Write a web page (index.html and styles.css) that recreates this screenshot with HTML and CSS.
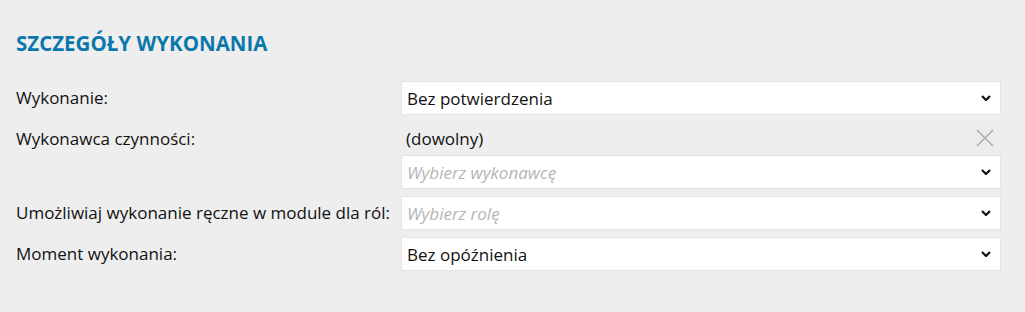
FILE: index.html
```html
<!DOCTYPE html>
<html lang="pl">
<head>
<meta charset="utf-8">
<link rel="stylesheet" href="styles.css">
</head>
<body>
<section class="panel">
  <h2 class="title">SZCZEGÓŁY WYKONANIA</h2>
  <div class="form">
    <div class="label">Wykonanie:</div>
    <div class="field">
      <div class="select"><span class="value">Bez potwierdzenia</span><svg class="chev" viewBox="0 0 10 6" width="10" height="6"><path d="M1 1 L5 5 L9 1" fill="none" stroke="#111" stroke-width="2.2"/></svg></div>
    </div>

    <div class="label">Wykonawca czynności:</div>
    <div class="field stack">
      <div class="chosen"><span class="value">(dowolny)</span><span class="clear"><svg viewBox="0 0 18 18" width="18" height="18"><path d="M1 1 L17 17 M17 1 L1 17" stroke="#a8a8a8" stroke-width="1.3" fill="none"/></svg></span></div>
      <div class="select"><span class="placeholder">Wybierz wykonawcę</span><svg class="chev" viewBox="0 0 10 6" width="10" height="6"><path d="M1 1 L5 5 L9 1" fill="none" stroke="#111" stroke-width="2.2"/></svg></div>
    </div>

    <div class="label">Umożliwiaj wykonanie ręczne w module dla ról:</div>
    <div class="field">
      <div class="select"><span class="placeholder">Wybierz rolę</span><svg class="chev" viewBox="0 0 10 6" width="10" height="6"><path d="M1 1 L5 5 L9 1" fill="none" stroke="#111" stroke-width="2.2"/></svg></div>
    </div>

    <div class="label">Moment wykonania:</div>
    <div class="field">
      <div class="select"><span class="value">Bez opóźnienia</span><svg class="chev" viewBox="0 0 10 6" width="10" height="6"><path d="M1 1 L5 5 L9 1" fill="none" stroke="#111" stroke-width="2.2"/></svg></div>
    </div>
  </div>
</section>
</body>
</html>
```
FILE: styles.css
```css
html, body {
  margin: 0;
  padding: 0;
  background: #eeeeee;
}
body {
  font-family: "Open Sans", "Noto Sans", sans-serif;
  color: #111;
  width: 1025px;
  height: 312px;
  overflow: hidden;
}
.panel {
  padding: 29px 24px 0 16px;
}
.title {
  margin: 0 0 23px 0;
  font-size: 20.5px;
  font-weight: 700;
  color: #0b78ac;
  line-height: 29px;
  letter-spacing: 0;
}
.form {
  display: grid;
  grid-template-columns: 385px 1fr;
  row-gap: 7px;
  align-items: start;
}
.label {
  font-size: 17px;
  line-height: 34px;
  white-space: nowrap;
}
.field.stack {
  display: flex;
  flex-direction: column;
}
.select {
  height: 32px;
  background: #fff;
  border: 1px solid #e3e3e3;
  display: flex;
  align-items: center;
  justify-content: space-between;
  padding: 0 9px 0 5px;
  font-size: 17px;
}
.value {
  color: #111;
}
.placeholder {
  color: #b5b5b5;
  font-style: italic;
}
.chev {
  display: block;
}
.chosen {
  height: 33px;
  display: flex;
  align-items: flex-start;
  justify-content: space-between;
  padding: 0 0 0 5px;
  font-size: 17px;
  line-height: 34px;
}
.clear {
  width: 32px;
  height: 32px;
  display: flex;
  align-items: center;
  justify-content: center;
  background: #ececec;
}
```
